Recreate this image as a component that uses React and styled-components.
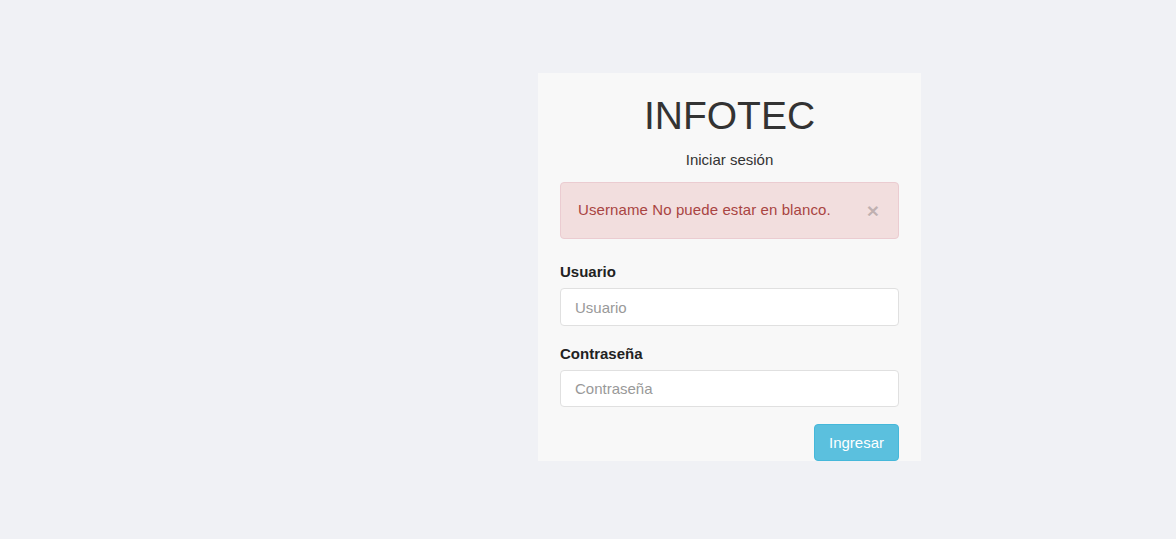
import React from "react";
import styled, { createGlobalStyle } from "styled-components";

const GlobalStyle = createGlobalStyle`
  html, body {
    margin: 0;
    padding: 0;
    background: #f0f1f5;
    font-family: "Liberation Sans", Arial, sans-serif;
    color: #333;
  }
  * {
    box-sizing: border-box;
  }
`;

const Page = styled.div`
  min-height: 539px;
  padding: 73px 0 0 538px;
`;

const Card = styled.div`
  width: 383px;
  background: #f8f8f8;
  padding: 21px 22px 0;
`;

const Title = styled.h1`
  margin: 0;
  font-size: 39px;
  line-height: 43px;
  font-weight: 400;
  text-align: center;
  color: #333;
`;

const Subtitle = styled.p`
  margin: 12px 0 12px;
  font-size: 15px;
  line-height: 21px;
  text-align: center;
  color: #333;
`;

const Alert = styled.div`
  display: flex;
  align-items: center;
  justify-content: space-between;
  padding: 16px 19px 17px 17px;
  margin-bottom: 22px;
  background: #f2dede;
  border: 1px solid #ebccd1;
  border-radius: 4px;
  color: #a94442;
  font-size: 15px;
  line-height: 22px;
  letter-spacing: 0.1px;
`;

const Close = styled.button`
  padding: 0;
  border: 0;
  background: transparent;
  font-family: "Liberation Sans", Arial, sans-serif;
  font-size: 21px;
  font-weight: bold;
  line-height: 1;
  color: #000;
  opacity: 0.2;
  text-shadow: 0 1px 0 #fff;
  cursor: pointer;
`;

const Group = styled.div`
  margin-bottom: ${(p) => p.$mb || 17}px;
`;

const Label = styled.label`
  display: block;
  margin-bottom: 6px;
  font-size: 15px;
  line-height: 21px;
  font-weight: bold;
  color: #222;
`;

const Input = styled.input`
  display: block;
  width: 100%;
  height: ${(p) => p.$h || 37}px;
  padding: 0 14px;
  font-family: "Liberation Sans", Arial, sans-serif;
  font-size: 15px;
  color: #555;
  background: #fff;
  border: 1px solid #e0e0e0;
  border-radius: 4px;
  outline: none;
  &::placeholder {
    color: #999;
  }
`;

const Actions = styled.div`
  display: flex;
  justify-content: flex-end;
`;

const Button = styled.button`
  height: 37px;
  padding: 0 14px;
  font-family: "Liberation Sans", Arial, sans-serif;
  font-size: 15px;
  color: #fff;
  background: #5bc0de;
  border: 1px solid #46b8da;
  border-radius: 4px;
  cursor: pointer;
`;

export default function App() {
  return (
    <>
      <GlobalStyle />
      <Page>
        <Card>
          <Title>INFOTEC</Title>
          <Subtitle>Iniciar sesión</Subtitle>
          <Alert>
            <span>Username No puede estar en blanco.</span>
            <Close type="button">×</Close>
          </Alert>
          <Group>
            <Label>Usuario</Label>
            <Input type="text" placeholder="Usuario" $h={38} />
          </Group>
          <Group $mb={17}>
            <Label>Contraseña</Label>
            <Input type="password" placeholder="Contraseña" />
          </Group>
          <Actions>
            <Button type="button">Ingresar</Button>
          </Actions>
        </Card>
      </Page>
    </>
  );
}
